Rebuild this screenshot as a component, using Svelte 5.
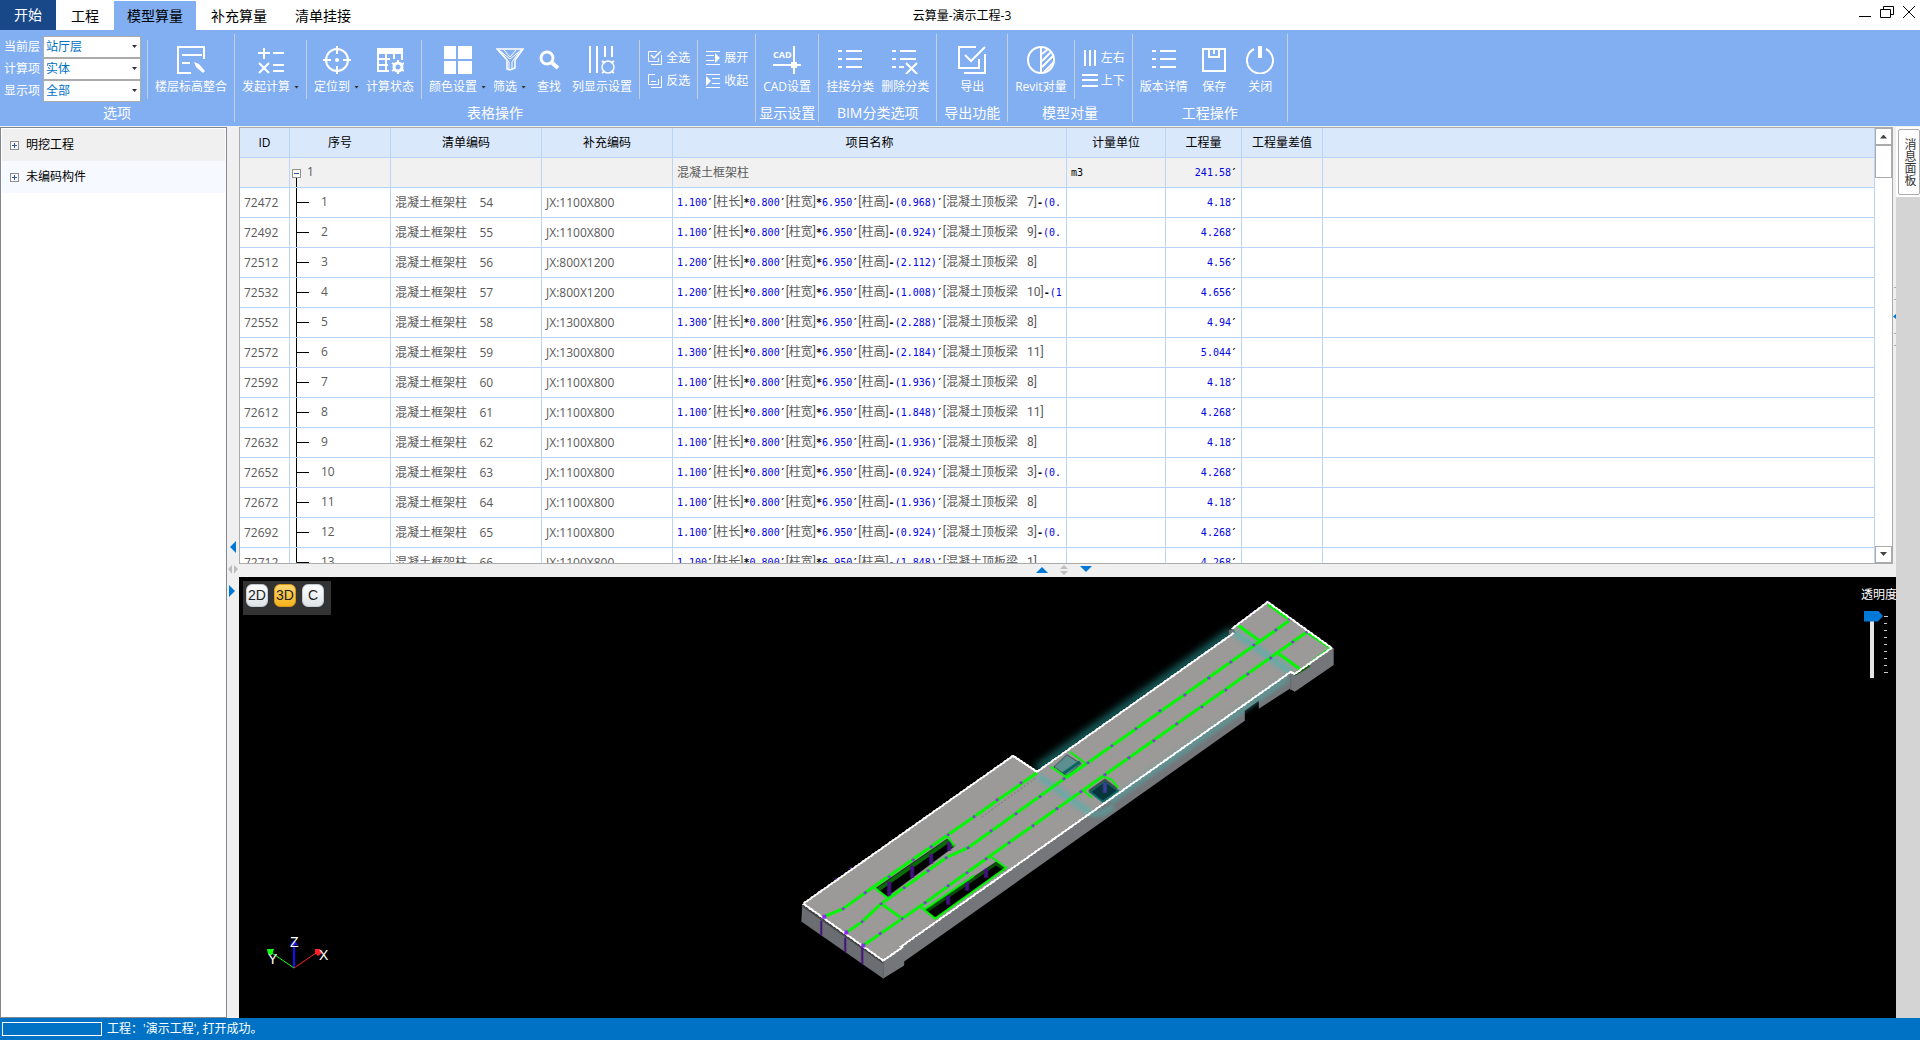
<script lang="ts">
  type Row = {
    id: number;
    name: string;
    code: string;
    length: string;
    minus: string;
    beam: string;
    rest: string;
    qty: string;
  };

  const tabs = ['工程', '模型算量', '补充算量', '清单挂接'];
  const columns = ['ID', '序号', '清单编码', '补充编码', '项目名称', '计量单位', '工程量', '工程量差值', ''];

  const rows: Row[] = [
    { id: 72472, name: '54', code: 'JX:1100X800', length: '1.100', minus: '0.968', beam: '7', rest: '(0.', qty: '4.18' },
    { id: 72492, name: '55', code: 'JX:1100X800', length: '1.100', minus: '0.924', beam: '9', rest: '(0.', qty: '4.268' },
    { id: 72512, name: '56', code: 'JX:800X1200', length: '1.200', minus: '2.112', beam: '8', rest: '', qty: '4.56' },
    { id: 72532, name: '57', code: 'JX:800X1200', length: '1.200', minus: '1.008', beam: '10', rest: '(1', qty: '4.656' },
    { id: 72552, name: '58', code: 'JX:1300X800', length: '1.300', minus: '2.288', beam: '8', rest: '', qty: '4.94' },
    { id: 72572, name: '59', code: 'JX:1300X800', length: '1.300', minus: '2.184', beam: '11', rest: '', qty: '5.044' },
    { id: 72592, name: '60', code: 'JX:1100X800', length: '1.100', minus: '1.936', beam: '8', rest: '', qty: '4.18' },
    { id: 72612, name: '61', code: 'JX:1100X800', length: '1.100', minus: '1.848', beam: '11', rest: '', qty: '4.268' },
    { id: 72632, name: '62', code: 'JX:1100X800', length: '1.100', minus: '1.936', beam: '8', rest: '', qty: '4.18' },
    { id: 72652, name: '63', code: 'JX:1100X800', length: '1.100', minus: '0.924', beam: '3', rest: '(0.', qty: '4.268' },
    { id: 72672, name: '64', code: 'JX:1100X800', length: '1.100', minus: '1.936', beam: '8', rest: '', qty: '4.18' },
    { id: 72692, name: '65', code: 'JX:1100X800', length: '1.100', minus: '0.924', beam: '3', rest: '(0.', qty: '4.268' },
    { id: 72712, name: '66', code: 'JX:1100X800', length: '1.100', minus: '1.848', beam: '1', rest: '', qty: '4.268' }
  ];

  const ticks = [0, 1, 2, 3, 4, 5, 6, 7, 8];

  // column heads that show through the slab of the model
  const nodes = [
    [44, 337], [63, 329], [85, 313], [109, 297], [133, 280], [151, 267], [168, 255], [194, 237], [217, 220], [241, 203],
    [66, 353], [82, 342], [101, 324], [124, 308], [148, 291], [166, 278], [188, 268], [211, 251], [236, 234], [260, 217], [284, 199], [308, 183],
    [332, 166], [356, 149], [380, 131], [405, 115], [429, 98], [451, 82], [474, 65], [496, 50], [510, 39],
    [83, 366], [100, 354], [122, 339], [145, 323], [168, 306], [187, 293], [206, 279], [229, 263], [253, 246], [277, 229], [301, 212], [325, 195],
    [349, 178], [374, 161], [397, 144], [422, 127], [446, 110], [468, 94], [491, 78], [513, 62], [527, 52],
    [488, 22], [473, 33], [461, 42], [41, 311], [56, 300], [71, 289]
  ];

  let level = $state('站厅层');
  let item = $state('实体');
  let shown = $state('全部');
  let activeTab = $state('模型算量');
  let mode = $state('3D');
  let opacity = $state(0);
</script>

{#snippet icon(name: string)}
  <svg class="icon" viewBox="0 0 28 28" width="28" height="28" fill="none" stroke="#fff" stroke-width="2" aria-hidden="true">
    {#if name === 'floor'}
      <path d="M14 27H1V1h26v12M5 9h20M5 17h8" />
      <path d="M17 16l2 5 7 6 2-2-6-7z" fill="#fff" stroke="none" />
    {:else if name === 'calc'}
      <path d="M7 2v11M1 7h12M16 7h11M2 17l10 10M12 17L2 27M16 19h11M16 25h11" />
    {:else if name === 'target'}
      <circle cx="14" cy="14" r="11" />
      <path d="M14 0v8M14 20v8M0 14h8M20 14h8" />
      <circle cx="14" cy="14" r="2" fill="#fff" stroke="none" />
    {:else if name === 'status'}
      <path d="M1 2h26v6H1z" fill="#fff" stroke="none" />
      <path d="M2 3v22h11M2 13h12M2 19h10M10 8v18M18 8v5M26 8v6" />
      <circle cx="22" cy="21" r="4" stroke-width="3" />
      <path d="M22 14v3M22 25v3M16 17l3 2M25 23l3 2M16 25l3-2M25 19l3-2" />
    {:else if name === 'blocks'}
      <path d="M0 0h12v13H0zM14 0h14v13H14zM0 15h12v13H0zM14 15h14v13H14z" fill="#fff" stroke="none" />
    {:else if name === 'filter'}
      <path d="M1 3h26l-8 11v8l-5 2-3-1v-9z" stroke-width="1.5" />
      <path d="M3 4l11 9L25 4M8 4l6 7 6-7M5 6l8 10v7M23 6l-7 10v7" stroke-width="1" />
    {:else if name === 'search'}
      <circle cx="12" cy="12" r="6" stroke-width="3" />
      <path d="M16 16l7 6" stroke-width="4" />
    {:else if name === 'cols'}
      <path d="M2 0v27M9 0v27M17 0v11M24 0v11" />
      <circle cx="20" cy="21" r="6" stroke-width="1.5" />
      <path d="M14 15l3 2M26 15l-3 2M14 27l3-2M26 27l-3-2" />
    {:else if name === 'cad'}
      <text class="cad" x="0" y="12">CAD</text>
      <path d="M21 0v28M0 19h28" />
      <path d="M18 16h6v6h-6z" fill="#fff" stroke="none" />
    {:else if name === 'list'}
      <path d="M2 5h4M10 5h16M2 13h4M10 13h16M2 21h4M10 21h16" />
    {:else if name === 'listx'}
      <path d="M1 5h4M9 5h16M1 13h4M9 13h16M1 21h4M8 21h5M15 17l11 11M26 17L15 28" />
    {:else if name === 'export'}
      <path d="M18 1H1v21h20v-9M27 8v19H6M7 9l6 6L27 1" />
    {:else if name === 'revit'}
      <circle cx="14" cy="14" r="13" />
      <path d="M14 1v26M15 8l6-5M15 15l9-9M15 21l11-11M17 26l10-10" />
    {:else if name === 'save'}
      <path d="M3 3h22v22H3zM9 3v8h10V3M14 3v5" />
    {:else if name === 'power'}
      <path d="M8 3a13 13 0 1 0 12 0" />
      <path d="M14 0v12" stroke-width="4" />
    {/if}
  </svg>
{/snippet}

{#snippet smallIcon(name: string)}
  <svg class="small-icon" viewBox="0 0 16 16" width="16" height="16" fill="none" stroke="#fff" stroke-width="1" aria-hidden="true">
    {#if name === 'all'}
      <path d="M10 1.5H1.5v10h10V8M14.5 5v9.5H4" />
      <path d="M4 5l3 3 7-7" stroke-width="1.5" />
    {:else if name === 'invert'}
      <path d="M8 1.5H1.5v10h10V6M14.5 3v11.5H4M4 8.5h5" />
    {:else if name === 'expand'}
      <path d="M1 1.5h14M1 5.5h8M1 10.5h8M1 14.5h14" />
      <path d="M10 3l5 5-5 5z" fill="#fff" stroke="none" />
    {:else if name === 'collapse'}
      <path d="M1 1.5h14M7 5.5h8M7 10.5h8M1 14.5h14" />
      <path d="M1 3l5 5-5 5z" fill="#fff" stroke="none" />
    {:else if name === 'leftright'}
      <path d="M3 0v16M8 0v16M13 0v16" stroke-width="2" />
    {:else if name === 'updown'}
      <path d="M0 2h16M0 7h16M0 13h16" stroke-width="2" />
    {/if}
  </svg>
{/snippet}

{#snippet tool(name: string, label: string, menu = false)}
  <button class="tool">
    {@render icon(name)}
    <span class="tool-label">{label}{#if menu}<i class="caret"></i>{/if}</span>
  </button>
{/snippet}

{#snippet smallTool(name: string, label: string)}
  <button class="small-tool">{@render smallIcon(name)}{label}</button>
{/snippet}

{#snippet toggle(open: boolean)}
  <svg class="toggle" viewBox="0 0 9 9" width="9" height="9" aria-hidden="true">
    <rect x="0.5" y="0.5" width="8" height="8" fill="#fafafa" stroke="#919191" />
    <path d={open ? 'M2 4.5h5' : 'M2 4.5h5M4.5 2v5'} stroke="#3555a8" />
  </svg>
{/snippet}

<div class="app">
  <header class="titlebar">
    <nav class="tabs">
      <button class="tab start">开始</button>
      {#each tabs as tab}
        <button class="tab" class:active={tab === activeTab} onclick={() => (activeTab = tab)}>{tab}</button>
      {/each}
    </nav>
    <h1>云算量-演示工程-3</h1>
    <div class="window-buttons">
      <button aria-label="最小化">
        <svg viewBox="0 0 14 14" width="14" height="14" fill="none" stroke="#000"><path d="M1 11.5h12" /></svg>
      </button>
      <button aria-label="还原">
        <svg viewBox="0 0 14 14" width="14" height="14" fill="none" stroke="#000"><path d="M.5 4.5h10v8H.5zM3.5 4.5v-3h10v8h-3" /></svg>
      </button>
      <button aria-label="关闭窗口">
        <svg viewBox="0 0 14 14" width="14" height="14" fill="none" stroke="#000"><path d="M1 1l12 12M13 1L1 13" /></svg>
      </button>
    </div>
  </header>

  <div class="ribbon">
    <section class="group options">
      <div class="strip">
        <div class="fields">
          <label for="level">当前层</label>
          <span class="combo"><select id="level" bind:value={level}><option>站厅层</option></select></span>
          <label for="item">计算项</label>
          <span class="combo"><select id="item" bind:value={item}><option>实体</option></select></span>
          <label for="shown">显示项</label>
          <span class="combo"><select id="shown" bind:value={shown}><option>全部</option></select></span>
        </div>
        <div class="part">{@render tool('floor', '楼层标高整合')}</div>
      </div>
      <h2>选项</h2>
    </section>
    <section class="group">
      <div class="strip">
        <div class="part">{@render tool('calc', '发起计算', true)}</div>
        <div class="part">
          {@render tool('target', '定位到', true)}
          {@render tool('status', '计算状态')}
        </div>
        <div class="part">
          {@render tool('blocks', '颜色设置', true)}
          {@render tool('filter', '筛选', true)}
          {@render tool('search', '查找')}
          {@render tool('cols', '列显示设置')}
        </div>
        <div class="part stack">
          {@render smallTool('all', '全选')}
          {@render smallTool('invert', '反选')}
        </div>
        <div class="part stack">
          {@render smallTool('expand', '展开')}
          {@render smallTool('collapse', '收起')}
        </div>
      </div>
      <h2>表格操作</h2>
    </section>
    <section class="group">
      <div class="strip"><div class="part">{@render tool('cad', 'CAD设置')}</div></div>
      <h2>显示设置</h2>
    </section>
    <section class="group">
      <div class="strip">
        <div class="part">
          {@render tool('list', '挂接分类')}
          {@render tool('listx', '删除分类')}
        </div>
      </div>
      <h2>BIM分类选项</h2>
    </section>
    <section class="group export">
      <div class="strip"><div class="part">{@render tool('export', '导出')}</div></div>
      <h2>导出功能</h2>
    </section>
    <section class="group">
      <div class="strip">
        <div class="part">{@render tool('revit', 'Revit对量')}</div>
        <div class="part stack">
          {@render smallTool('leftright', '左右')}
          {@render smallTool('updown', '上下')}
        </div>
      </div>
      <h2>模型对量</h2>
    </section>
    <section class="group project">
      <div class="strip">
        <div class="part">
          {@render tool('list', '版本详情')}
          {@render tool('save', '保存')}
          {@render tool('power', '关闭')}
        </div>
      </div>
      <h2>工程操作</h2>
    </section>
  </div>

  <main class="workspace">
    <aside class="tree">
      <ul>
        <li class="selected">{@render toggle(false)}明挖工程</li>
        <li>{@render toggle(false)}未编码构件</li>
      </ul>
    </aside>

    <div class="splitter vertical">
      <svg viewBox="0 0 12 56" width="12" height="56" aria-hidden="true">
        <path d="M9 0v12L3 6z" fill="#0078d7" />
        <path d="M5 24v9L1 28zM7 24v9l4-5z" fill="#bdbdbd" />
        <path d="M2 44v12l6-6z" fill="#0078d7" />
      </svg>
    </div>

    <div class="center">
      <div class="grid-pane">
        <div class="grid-scroll">
          <table>
            <colgroup>
              <col class="c-id" /><col class="c-no" /><col class="c-list" /><col class="c-extra" /><col class="c-item" />
              <col class="c-unit" /><col class="c-qty" /><col class="c-diff" /><col />
            </colgroup>
            <thead>
              <tr>{#each columns as column}<th>{column}</th>{/each}</tr>
            </thead>
            <tbody>
              <tr class="parent">
                <td></td>
                <td class="seq">
                  <svg class="branch" viewBox="0 0 20 29" width="20" height="29" aria-hidden="true">
                    <path d="M6.5 14v15" stroke="#000" />
                    <rect x="2.5" y="10.5" width="8" height="8" fill="#fafafa" stroke="#919191" />
                    <path d="M4 14.5h5" stroke="#3555a8" />
                  </svg>1
                </td>
                <td></td>
                <td></td>
                <td>混凝土框架柱</td>
                <td class="unit">m3</td>
                <td class="qty">241.58<b>′</b></td>
                <td></td>
                <td></td>
              </tr>
              {#each rows as row, i}
                <tr>
                  <td>{row.id}</td>
                  <td class="seq">
                    <svg class="branch" viewBox="0 0 20 30" width="20" height="30" aria-hidden="true">
                      <path d={i === rows.length - 1 ? 'M6.5 0v14.5H19' : 'M6.5 0v30M6.5 14.5H19'} fill="none" stroke="#000" />
                    </svg><span class="child">{i + 1}</span>
                  </td>
                  <td>{`混凝土框架柱    ${row.name}`}</td>
                  <td>{row.code}</td>
                  <td class="formula">{row.length}<b>′</b><em>[柱长]</em><b>*</b>0.800<b>′</b><em>[柱宽]</em><b>*</b>6.950<b>′</b><em>[柱高]</em><b>-</b>({row.minus})<b>′</b><em>{`[混凝土顶板梁   ${row.beam}]`}</em>{#if row.rest}<b>-</b>{row.rest}{/if}</td>
                  <td></td>
                  <td class="qty">{row.qty}<b>′</b></td>
                  <td></td>
                  <td></td>
                </tr>
              {/each}
            </tbody>
          </table>
        </div>
        <div class="scrollbar">
          <button aria-label="向上滚动"><i class="up"></i></button>
          <div class="thumb"></div>
          <button class="end" aria-label="向下滚动"><i class="down"></i></button>
        </div>
      </div>

      <div class="splitter horizontal">
        <svg viewBox="0 0 56 12" width="56" height="12" aria-hidden="true">
          <path d="M0 9h12L6 3z" fill="#0078d7" />
          <path d="M24 5h8l-4-4zM24 7h8l-4 4z" fill="#bdbdbd" />
          <path d="M44 2h12l-6 6z" fill="#0078d7" />
        </svg>
      </div>

      <div class="viewport">
        <svg class="model" viewBox="0 0 1657 442" role="img" aria-label="三维模型">
          <defs>
            <filter id="glow" x="-20%" y="-20%" width="140%" height="140%"><feGaussianBlur stdDeviation="4" /></filter>
            <filter id="soft" x="-20%" y="-20%" width="140%" height="140%"><feGaussianBlur stdDeviation="2" /></filter>
          </defs>
          <g transform="translate(541 3)" fill="none">
            <path d="M257 190L454 51" stroke="#2aa9a5" stroke-width="8" opacity="0.7" filter="url(#glow)" />
            <path d="M22 324L103 381V399L21 342z" fill="#6a6d71" />
            <path d="M103 381L121 368 511 92 515 94 552 68H554V85L515 112 510 109 479 129V121L465 131V141L124 382V386L103 399z" fill="#75767a" />
            <path d="M103 382v17M511 93v17" stroke="#66686c" />
            <path d="M22 326L103 383" stroke="#45464a" stroke-width="2" />
            <path d="M23 324L233 176 257 192 454 53 452 49 488 22 552 68 515 94 511 92 121 367 122 368 103 381z" fill="#9b9a98" />
            <path d="M449 50l5-1 2 4-4 3-3-2z" fill="#6c6f72" />

            <g stroke="#45b5b0" filter="url(#soft)">
              <path d="M258 196L310 233" stroke-width="6" opacity="0.6" />
              <path d="M454 52L511 92" stroke-width="7" opacity="0.6" />
              <path d="M330 222L508 98" stroke-width="6" opacity="0.5" />
              <path d="M309 234h12l12-7" stroke-width="5" opacity="0.6" />
            </g>

            <path d="M96 308L167 259 174 267 107 317z" fill="#000" />
            <path d="M98 310L167 262 174 267" stroke="#0a6b0a" stroke-width="4" />
            <path d="M144 330L216 282 226 288 155 339z" fill="#000" />
            <path d="M147 331L216 284 225 290" stroke="#085008" stroke-width="3" />
            <path d="M109 302v15M132 286v12M151 274v10M169 262v9M168 316v9M187 302v9M206 289v9" stroke="#44127e" stroke-width="4" />
            <path d="M274 187L287 175 301 184 287 196z" fill="#5b8f90" stroke="#3c5052" />
            <path d="M283 194L300 182" stroke="#0c6361" stroke-width="3" />
            <path d="M310 212L325 201 338 211 323 222z" fill="#06353a" stroke="#0d6c69" stroke-width="2" />
            <path d="M325 203v10" stroke="#3b3f96" stroke-width="4" />
            <path d="M309 211L325 200 337 209" stroke="#45474b" stroke-width="2" />

            <g stroke="#00f800" stroke-width="3" stroke-linejoin="round">
              <path d="M44 337L63 329 85 313 168 255 257 193" />
              <path d="M66 353L82 342 101 324 166 278 188 268 284 199 308 183 509 41" />
              <path d="M83 366L122 339 145 323 206 279 325 195 527 52" />
              <path d="M101 324L122 339M488 24L509 39M458 45L480 61M498 73L520 89" />
            </g>
            <g stroke="#00f800" stroke-width="2">
              <path d="M94 308L107 318M167 256L174 266" />
              <path d="M140 327L155 339 226 288 211 277M144 330L194 296" />
              <path d="M271 187L287 198 306 184 290 172" />
              <path d="M304 211L312 218M325 197L332 200 338 208M528 53L550 68 517 93" />
            </g>
            <path d="M515 95l15-9" stroke="#075c07" stroke-width="2" />
            <path d="M202 237L256 198" stroke="#555" stroke-dasharray="1 3" />
            <path d="M41 341v15M65 358v15M82 368v17" stroke="#44127e" stroke-width="2" />
            <g fill="#8c2be8">
              {#each nodes as [x, y]}<circle cx={x} cy={y} r="1.5" />{/each}
            </g>
            <path d="M23 324L103 381 122 368 121 367 511 92 515 94 552 68 488 22 452 49M454 53L257 192 233 176 23 324" stroke="#fff" stroke-width="2" shape-rendering="crispEdges" />
            <path d="M44 335v4M66 351v4M83 364v4" stroke="#8c2be8" stroke-width="4" />
          </g>
        </svg>

        <div class="modes">
          {#each ['2D', '3D', 'C'] as m}
            <button class:on={mode === m} onclick={() => (mode = m)}>{m}</button>
          {/each}
        </div>

        <div class="opacity">
          <label for="opacity">透明度</label>
          <div class="slide">
            <input id="opacity" type="range" min="0" max="8" bind:value={opacity} />
            <div class="ticks">{#each ticks as t}<i class:edge={t % 8 === 0}></i>{/each}</div>
          </div>
        </div>

        <svg class="axes" viewBox="0 0 70 40" width="70" height="40" aria-hidden="true">
          <path d="M30 34V8" stroke="#1010ff" stroke-width="2" />
          <path d="M30 34L52 19" stroke="#f22" />
          <path d="M30 34L8 19" stroke="#1f1" />
          <path d="M26 11l4-5 4 5z" fill="#1010ff" />
          <path d="M51 15h5l2 4-4 3-3-3z" fill="#f22" />
          <path d="M3 15h7l-2 6-4-1z" fill="#1f1" />
          <text x="26" y="13">Z</text>
          <text x="55" y="26">X</text>
          <text x="4" y="30">Y</text>
        </svg>
      </div>
    </div>

    <div class="edge-splitter"><i></i><b></b><i></i></div>

    <aside class="dock">
      <div class="dock-head"><button>消息面板</button></div>
    </aside>
  </main>

  <footer class="statusbar">
    <div class="progress"></div>
    <span>工程：'演示工程', 打开成功。</span>
  </footer>
</div>

<style>
  :global(body) {
    margin: 0;
  }

  .app {
    --ribbon: #82aef2;
    --line: #bad3f8;
    --blue: #0072c6;
    display: flex;
    flex-direction: column;
    height: 100vh;
    overflow: hidden;
    background: #fff;
    color: #000;
    font: 12px/16px 'Open Sans', 'Noto Sans CJK SC', sans-serif;
  }

  .app * {
    box-sizing: border-box;
  }

  button {
    margin: 0;
    padding: 0;
    border: 0;
    background: none;
    color: inherit;
    font: inherit;
    white-space: nowrap;
  }

  svg {
    display: block;
    flex: none;
  }

  h1,
  h2,
  ul {
    margin: 0;
    padding: 0;
    font-weight: normal;
    list-style: none;
  }

  /* title bar */
  .titlebar {
    display: grid;
    grid-template-columns: 1fr auto 1fr;
    height: 30px;
  }

  .tabs {
    display: flex;
    gap: 2px;
    font-size: 14px;
  }

  .tab {
    height: 29px;
    margin-top: 1px;
    padding: 0 13px;
  }

  .tab.start {
    height: 30px;
    margin-top: 0;
    padding: 0 14px;
    background: #194889;
    color: #fff;
  }

  .tab.active {
    background: var(--ribbon);
  }

  h1 {
    padding-left: 4px;
    font-size: 12px;
    line-height: 32px;
  }

  .window-buttons {
    display: flex;
    justify-content: flex-end;
    gap: 8px;
    padding: 4px 4px 0 0;
    height: 20px;
  }

  /* ribbon */
  .ribbon {
    display: flex;
    height: 96px;
    padding-top: 4px;
    background: var(--ribbon);
    color: #fff;
  }

  .group {
    display: flex;
    flex-direction: column;
    height: 88px;
    border-right: 1px solid #c6cfdd;
  }

  .group.export {
    min-width: 71px;
  }

  .strip {
    display: flex;
    height: 76px;
    padding-top: 2px;
  }

  .group h2 {
    padding: 0 3px;
    font-size: 14px;
    line-height: 18px;
    text-align: center;
    white-space: nowrap;
  }

  .part {
    display: flex;
    flex: auto;
    justify-content: center;
    gap: 7px;
    height: 59px;
    margin-top: 4px;
    padding: 0 7px;
  }

  .part + .part,
  .fields + .part {
    border-left: 1px solid #c6cfdd;
  }

  .tool {
    display: flex;
    flex-direction: column;
    align-items: center;
    min-width: 32px;
    padding-top: 6px;
    gap: 5px;
  }

  .project .tool {
    min-width: 39px;
  }

  .tool-label {
    display: flex;
    align-items: center;
    gap: 4px;
  }

  .caret {
    width: 5px;
    height: 3px;
    background: #333;
    clip-path: polygon(0 0, 100% 0, 50% 100%);
  }

  .cad {
    fill: #fff;
    stroke: none;
    font: bold 9px 'Open Sans', sans-serif;
  }

  .stack {
    flex-direction: column;
    gap: 7px;
    padding: 0 7px;
  }

  .small-tool {
    display: flex;
    align-items: center;
    gap: 3px;
  }

  .fields {
    display: grid;
    grid-template-columns: auto 98px;
    grid-auto-rows: 22px;
    align-items: center;
    align-content: start;
    column-gap: 3px;
    padding: 0 6px 0 4px;
  }

  .combo {
    position: relative;
    height: 22px;
  }

  .combo::after {
    content: '';
    position: absolute;
    top: 9px;
    right: 4px;
    width: 5px;
    height: 3px;
    background: #333;
    clip-path: polygon(0 0, 100% 0, 50% 100%);
    pointer-events: none;
  }

  select {
    appearance: none;
    display: block;
    width: 100%;
    height: 22px;
    padding: 0 2px;
    border: 1px solid #ababab;
    border-radius: 0;
    background: #fff;
    color: var(--blue);
    font: inherit;
  }

  /* workspace */
  .workspace {
    display: flex;
    flex: 1;
    min-height: 0;
    padding-top: 1px;
    background: #f0f0f0;
  }

  .tree {
    flex: none;
    width: 227px;
    padding: 1px;
    border: 1px solid #828790;
    background: #fff;
  }

  .tree li {
    display: flex;
    align-items: center;
    gap: 7px;
    height: 32px;
    padding-left: 8px;
    background: #f6f9ff;
  }

  .tree li.selected {
    background: #f0f0f0;
  }

  .splitter {
    display: flex;
    flex: none;
    align-items: center;
    justify-content: center;
    background: #f0f0f0;
  }

  .splitter.vertical {
    width: 12px;
    padding-bottom: 8px;
  }

  .splitter.horizontal {
    height: 13px;
    padding-right: 8px;
  }

  .center {
    display: flex;
    flex: 1;
    flex-direction: column;
    min-width: 0;
  }

  .grid-pane {
    display: flex;
    flex: 435 1 0;
    min-height: 0;
    margin-right: 3px;
    border: 1px solid #ababab;
    background: #fff;
  }

  .grid-scroll {
    flex: 1;
    min-width: 0;
    overflow: hidden;
  }

  table {
    width: 100%;
    table-layout: fixed;
    border-collapse: separate;
    border-spacing: 0;
    color: #5a5a5a;
  }

  .c-id { width: 50px; }
  .c-no { width: 101px; }
  .c-list { width: 151px; }
  .c-extra { width: 131px; }
  .c-item { width: 394px; }
  .c-unit { width: 99px; }
  .c-qty { width: 76px; }
  .c-diff { width: 81px; }

  th,
  td {
    height: 30px;
    padding: 0 4px;
    border-right: 1px solid var(--line);
    border-bottom: 1px solid var(--line);
    overflow: hidden;
    text-align: left;
    white-space: pre;
  }

  th {
    padding: 0;
    background: #dae8fc;
    color: #000;
    font-weight: normal;
    text-align: center;
  }

  .parent td {
    background: #f1f1f1;
  }

  .seq {
    padding: 0;
    white-space: nowrap;
  }

  .branch {
    display: inline-block;
    margin: 0 -3px -1px 0;
    vertical-align: middle;
  }

  .child {
    padding-left: 14px;
  }

  td.formula,
  td.qty,
  td.unit {
    color: #0000e6;
    font-family: 'DejaVu Sans Mono', monospace;
    font-size: 10px;
  }

  td.unit,
  .formula b,
  .qty b {
    color: #000;
  }

  td.qty {
    text-align: right;
  }

  .formula em {
    color: #5a5a5a;
    font: normal 12px/16px Roboto, 'Noto Sans CJK SC', sans-serif;
  }

  .scrollbar {
    display: flex;
    flex-direction: column;
    flex: none;
    width: 17px;
  }

  .scrollbar button {
    display: flex;
    align-items: center;
    justify-content: center;
    height: 17px;
    border: 1px solid #ababab;
  }

  .scrollbar .end {
    margin-top: auto;
  }

  .scrollbar i {
    width: 7px;
    height: 4px;
    background: #444;
  }

  .up {
    clip-path: polygon(0 100%, 50% 0, 100% 100%);
  }

  .down {
    clip-path: polygon(0 0, 100% 0, 50% 100%);
  }

  .thumb {
    height: 33px;
    border: 1px solid #ababab;
  }

  /* 3D view */
  .viewport {
    position: relative;
    flex: 442 1 0;
    min-height: 0;
    background: #000;
    color: #fff;
    overflow: hidden;
  }

  .model {
    width: 100%;
    height: 100%;
  }

  .modes {
    position: absolute;
    top: 4px;
    left: 4px;
    display: flex;
    gap: 6px;
    width: 88px;
    height: 34px;
    padding: 3px;
    background: #333;
  }

  .modes button {
    width: 22px;
    height: 23px;
    border: 1px solid #c3ccd4;
    border-radius: 6px;
    background: linear-gradient(#fff, #dfe4e8);
    color: #222;
    font: 14px/20px 'Liberation Sans', sans-serif;
  }

  .modes button.on {
    border-color: #d99a1c;
    background: linear-gradient(#ffd873, #f6b21b);
  }

  .opacity {
    position: absolute;
    top: 10px;
    right: 0;
    width: 35px;
    white-space: nowrap;
  }

  .slide {
    display: flex;
    gap: 1px;
    margin: 8px 0 0 3px;
  }

  input[type='range'] {
    appearance: none;
    width: 19px;
    height: 67px;
    margin: 0;
    background: linear-gradient(#e6e6e6, #e6e6e6) 6px 0 / 4px 100% no-repeat;
    writing-mode: vertical-lr;
  }

  input[type='range']::-webkit-slider-thumb {
    appearance: none;
    width: 19px;
    height: 11px;
    background: #0078d7;
    clip-path: polygon(0 0, 14px 0, 100% 50%, 14px 100%, 0 100%);
  }

  .ticks {
    display: flex;
    flex-direction: column;
    gap: 6px;
    padding-top: 5px;
  }

  .ticks i {
    width: 3px;
    height: 1px;
    background: #ccc;
  }

  .ticks .edge {
    width: 4px;
  }

  .axes {
    position: absolute;
    bottom: 44px;
    left: 25px;
  }

  .axes text {
    fill: #fff;
    font: 14px 'Liberation Sans', sans-serif;
  }

  /* right dock */
  .edge-splitter {
    display: flex;
    flex-direction: column;
    gap: 14px;
    width: 0;
    padding-top: 160px;
  }

  .edge-splitter i,
  .edge-splitter b {
    position: relative;
    width: 2px;
    height: 13px;
    margin-left: -2px;
    border: solid #ababab;
    border-width: 1px 0;
  }

  .edge-splitter b {
    width: 3px;
    height: 5px;
    margin-left: -3px;
    border: 0;
    background: #0078d7;
    clip-path: polygon(0 50%, 100% 0, 100% 100%);
  }

  .dock {
    flex: none;
    width: 24px;
    background: #d4d4d4;
  }

  .dock-head {
    padding: 2px 0 2px 2px;
    background: #fff;
  }

  .dock button {
    display: block;
    width: 22px;
    height: 66px;
    border: 1px solid #ababab;
    border-radius: 2px;
    color: #333;
    writing-mode: vertical-rl;
  }

  /* status bar */
  .statusbar {
    display: flex;
    align-items: center;
    gap: 5px;
    flex: none;
    height: 22px;
    padding-left: 2px;
    background: var(--blue);
    color: #fff;
  }

  .progress {
    width: 100px;
    height: 14px;
    border: 1px solid #fff;
  }
</style>
